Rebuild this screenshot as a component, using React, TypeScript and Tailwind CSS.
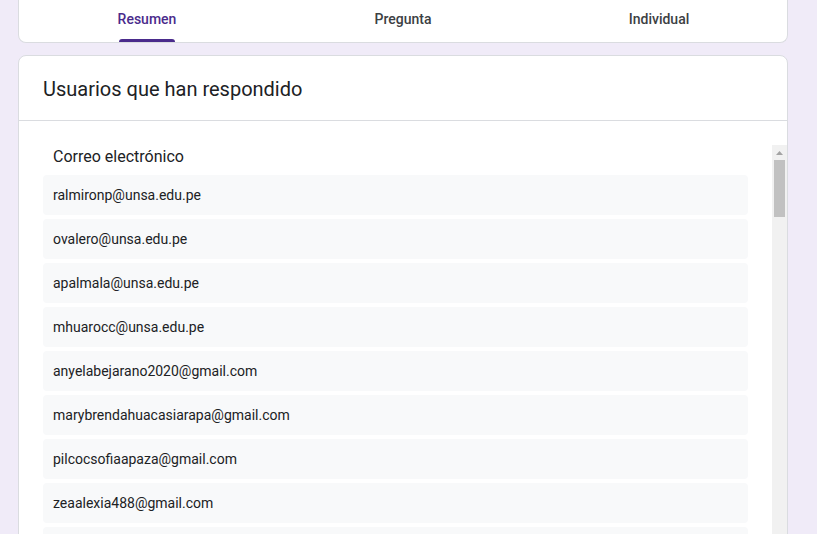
import React from 'react';

const emails = [
  'ralmironp@unsa.edu.pe',
  'ovalero@unsa.edu.pe',
  'apalmala@unsa.edu.pe',
  'mhuarocc@unsa.edu.pe',
  'anyelabejarano2020@gmail.com',
  'marybrendahuacasiarapa@gmail.com',
  'pilcocsofiaapaza@gmail.com',
  'zeaalexia488@gmail.com',
];

const tabs = ['Resumen', 'Pregunta', 'Individual'];

export default function App() {
  return (
    <div
      className="h-[534px] overflow-hidden bg-[#f0ebf8] pl-[18px]"
      style={{ fontFamily: 'Roboto, "Liberation Sans", sans-serif' }}
    >
      {/* tabs card */}
      <div className="w-[770px] h-[43px] bg-white border-x border-b border-[#dadce0] rounded-b-lg grid grid-cols-3">
        {tabs.map((t, i) => (
          <div key={t} className="relative flex items-start justify-center pt-[10px]">
            <span
              className={
                'text-[14px] leading-[18px] font-medium ' +
                (i === 0 ? 'text-[#4a2b8c]' : 'text-[#3c4043]')
              }
            >
              {t}
            </span>
            {i === 0 && (
              <span className="absolute bottom-0 left-1/2 -translate-x-1/2 w-[56px] h-[3px] rounded-t-[3px] bg-[#4a2b8c]" />
            )}
          </div>
        ))}
      </div>

      {/* responders card */}
      <div className="mt-[12px] w-[770px] h-[500px] bg-white border border-[#dadce0] rounded-lg">
        <div className="h-[65px] px-[24px] flex items-center border-b border-[#dadce0]">
          <h2 className="text-[20px] leading-[24px] text-[#202124] pt-[2px]">Usuarios que han respondido</h2>
        </div>
        <div className="pt-[24px] flex">
          <div className="flex-1 pl-[24px] pr-[24px]">
            <div className="pl-[10px] text-[16px] leading-[24px] text-[#202124] mb-[6px]">
              Correo electrónico
            </div>
            <div className="flex flex-col gap-[4px]">
              {emails.map((e) => (
                <div
                  key={e}
                  className="h-[40px] flex items-center pl-[10px] bg-[#f8f9fa] rounded text-[14px] text-[#202124]"
                >
                  {e}
                </div>
              ))}
              <div className="h-[40px] bg-[#f8f9fa] rounded" />
            </div>
          </div>
          {/* scrollbar */}
          <div className="w-[15px] h-[400px] bg-[#f1f1f1] flex flex-col items-center">
            <div className="h-[15px] flex items-center justify-center">
              <svg width="7" height="4" viewBox="0 0 7 4">
                <polygon points="3.5,0 7,4 0,4" fill="#a3a3a3" />
              </svg>
            </div>
            <div className="w-[11px] h-[57px] bg-[#c1c1c1]" />
          </div>
        </div>
      </div>
    </div>
  );
}
